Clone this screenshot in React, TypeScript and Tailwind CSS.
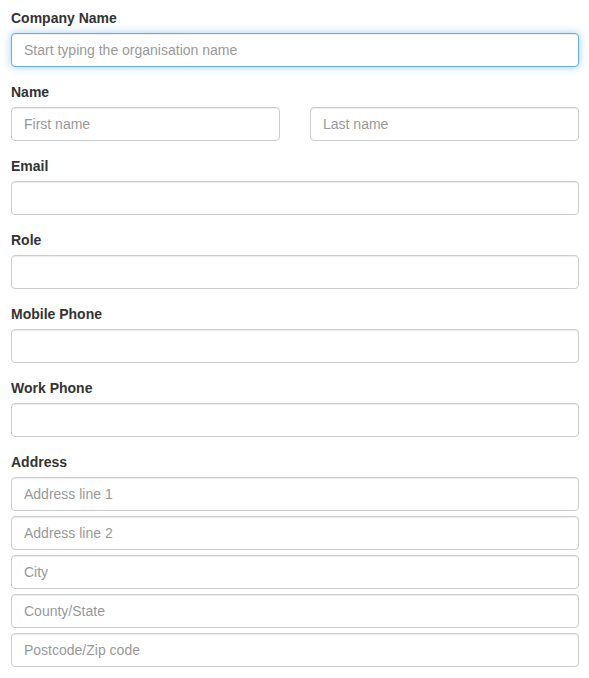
import React from 'react';

const inputBase =
  'block w-full h-[34px] px-3 py-[6px] text-[14px] leading-[20px] text-[#555] bg-white rounded-[4px] border outline-none placeholder:text-[#999]';
const inputIdle = `${inputBase} border-[#ccc] shadow-[inset_0_1px_1px_rgba(0,0,0,0.075)]`;
const inputFocus = `${inputBase} border-[#66afe9] shadow-[inset_0_1px_1px_rgba(0,0,0,0.075),0_0_8px_rgba(102,175,233,0.6)]`;

function Label({ children }: { children: React.ReactNode }) {
  return <label className="block mb-[5px] text-[14px] leading-[20px] font-bold text-[#333]">{children}</label>;
}

export default function App() {
  return (
    <div
      className="w-[589px] min-h-[678px] bg-white pt-2 pl-[11px] pr-[10px]"
      style={{ fontFamily: '"Liberation Sans", Arial, sans-serif' }}
    >
      <div className="mb-[15px]">
        <Label>Company Name</Label>
        <input type="text" className={inputFocus} placeholder="Start typing the organisation name" />
      </div>

      <div className="mb-[15px]">
        <Label>Name</Label>
        <div className="grid grid-cols-2 gap-[30px]">
          <input type="text" className={inputIdle} placeholder="First name" />
          <input type="text" className={inputIdle} placeholder="Last name" />
        </div>
      </div>

      {['Email', 'Role', 'Mobile Phone', 'Work Phone'].map((l) => (
        <div key={l} className="mb-[15px]">
          <Label>{l}</Label>
          <input type="text" className={inputIdle} />
        </div>
      ))}

      <div>
        <Label>Address</Label>
        <div className="flex flex-col gap-[5px]">
          {['Address line 1', 'Address line 2', 'City', 'County/State', 'Postcode/Zip code'].map((p) => (
            <input key={p} type="text" className={inputIdle} placeholder={p} />
          ))}
        </div>
      </div>
    </div>
  );
}
